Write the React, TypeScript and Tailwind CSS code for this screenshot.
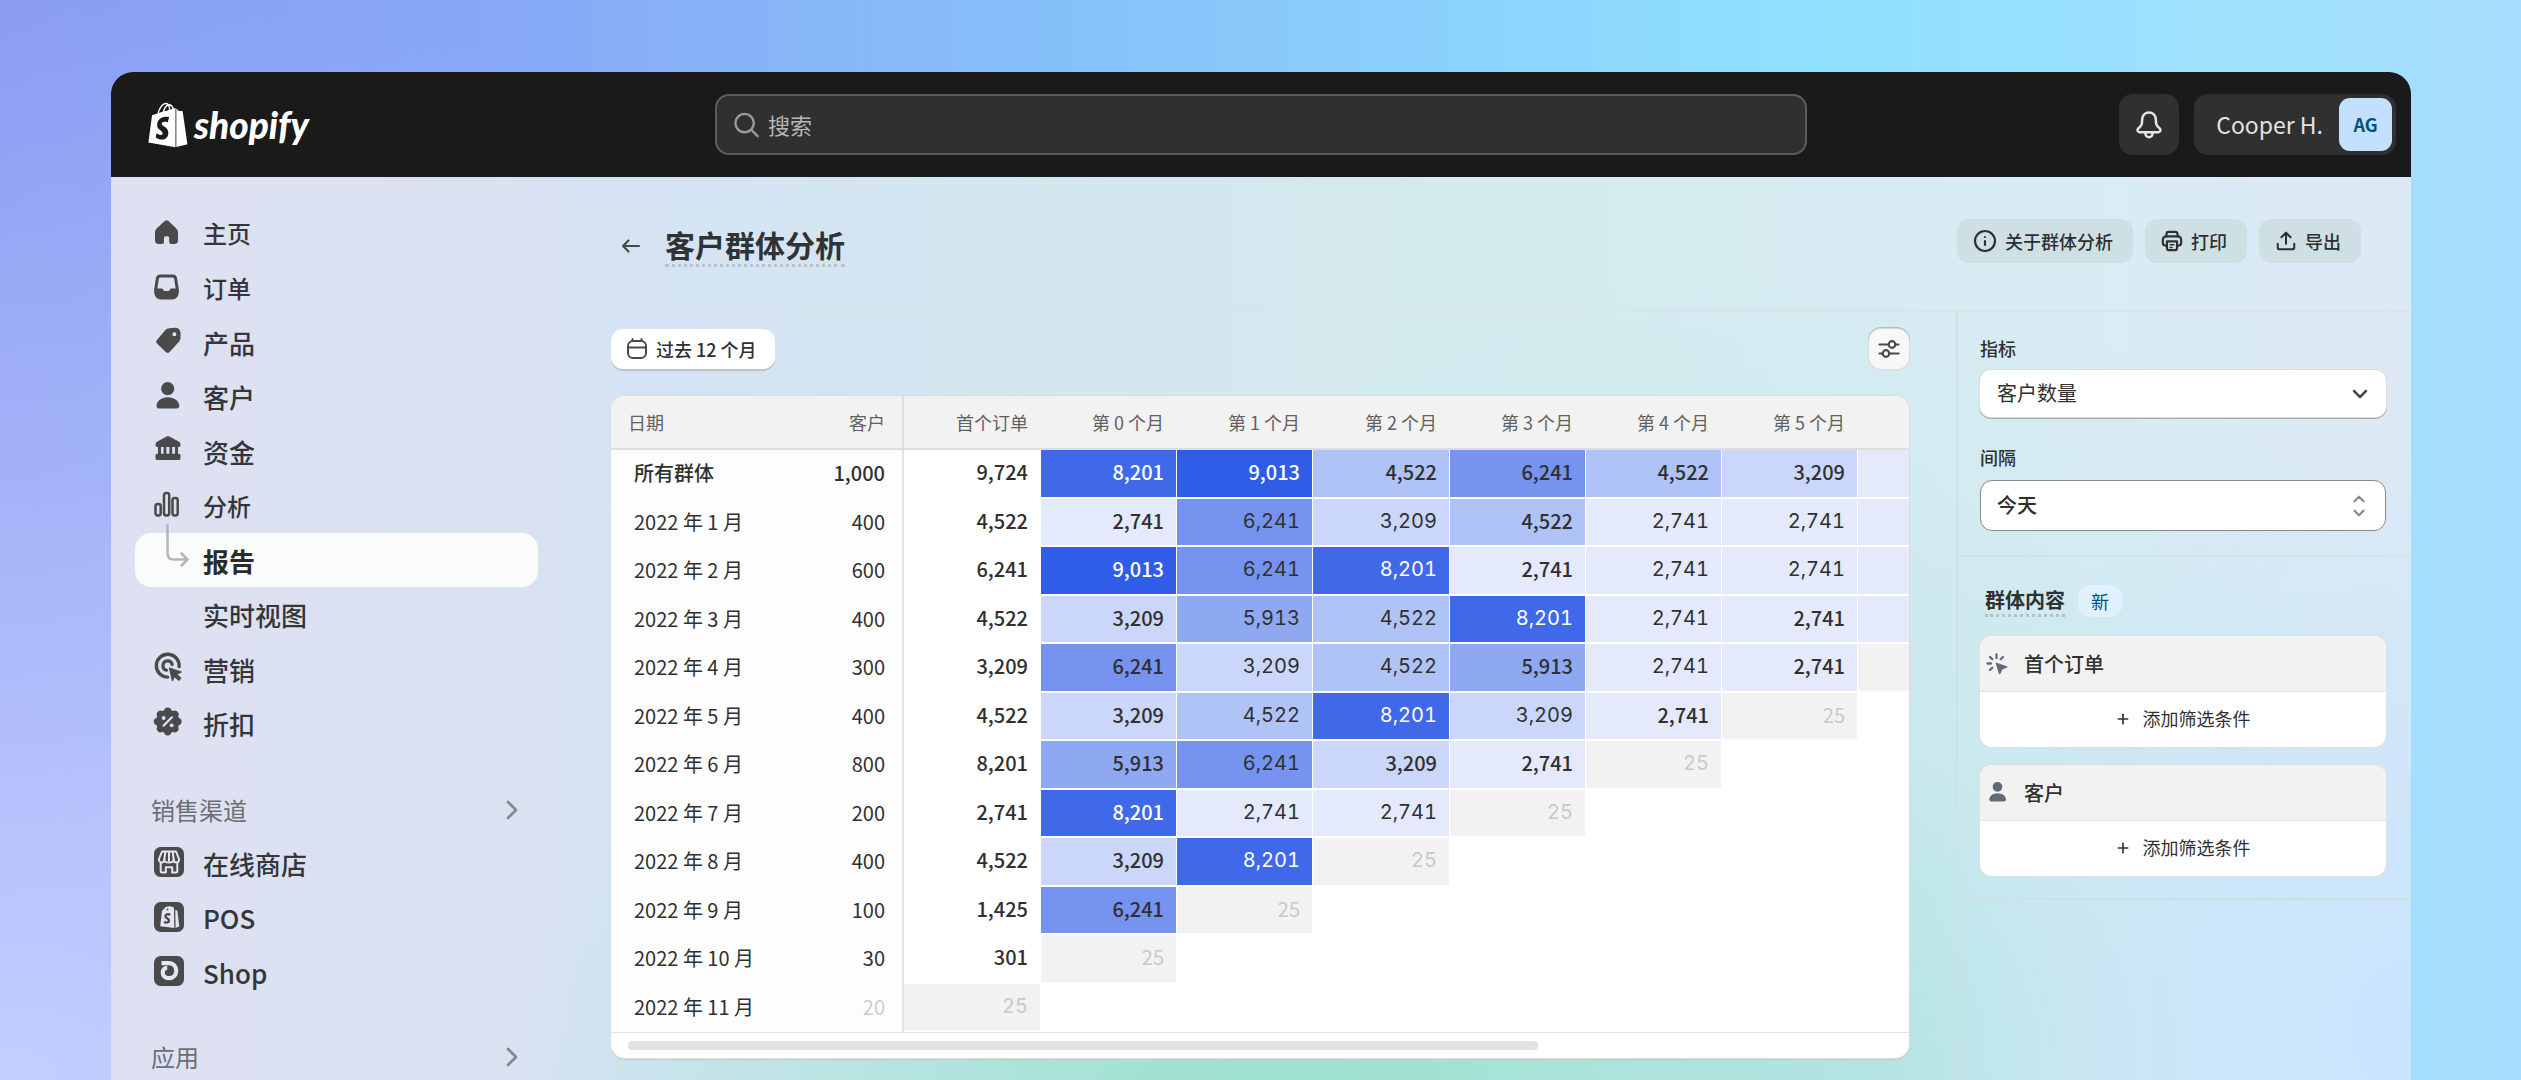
import React from "react";
import { FaShopify } from "react-icons/fa";
import { ChevronDown, ChevronRight, ChevronUp, Info, Plus, Upload } from "lucide-react";

const ICON = "h-[30px] w-[30px] shrink-0 overflow-visible text-[#4a4a4a]";

function HomeIcon() {
  return (
    <svg viewBox="0 0 30 30" className={ICON} fill="currentColor" aria-hidden="true">
      <path d="M12.6 3.1c1.1-1 2.8-1 3.9 0l7.6 7.2c1.2 1.1 1.9 2.7 1.9 4.3v8c0 2-1.3 3.4-3.2 3.4h-3.6c-1.2 0-2-.9-2-2v-4c0-1-.8-1.8-1.8-1.8h-1.6c-1 0-1.8.8-1.8 1.8v4c0 1.1-.8 2-2 2H6.4C4.4 26 3 24.6 3 22.6v-8c0-1.6.7-3.2 1.9-4.3z" />
    </svg>
  );
}

function OrdersIcon() {
  return (
    <svg viewBox="0 0 30 30" className={ICON} fill="currentColor" fillRule="evenodd" aria-hidden="true">
      <path d="M8.2 1.5h12.6c2.4 0 4 1.4 4.3 3.7l1.7 10.8c.6 6-1.6 10.5-7 10.5H9.2c-5.4 0-7.6-4.5-7-10.5L3.9 5.2C4.2 2.9 5.8 1.5 8.2 1.5zM8.6 4.4h11.8c1 0 1.6.6 1.8 1.5l1.4 9.6h-4.2c-.8 0-1.3.5-1.6 1.2-.5 1-1 1.4-2 1.4h-2.6c-1 0-1.5-.4-2-1.4-.3-.7-.8-1.2-1.6-1.2H5.4l1.4-9.6c.2-.9.8-1.5 1.8-1.5z" />
    </svg>
  );
}

function TagIcon() {
  return (
    <svg viewBox="0 0 30 30" className={ICON} fill="currentColor" fillRule="evenodd" aria-hidden="true">
      <path d="M17.5 1.2L22.6.8c3.9 0 5.9 2 5.9 5.7v4c0 2-.7 3.3-2 4.8l-8.9 9.7c-1 1.1-2.6 1.1-3.6.2L5 16.6c-1-1-1-2.4-.1-3.5L13 3.4c1.3-1.5 2.5-2 4.5-2.2zM22.4 5.2a2 2 0 1 0 0 4 2 2 0 0 0 0-4z" />
    </svg>
  );
}

function PersonIcon({ className = ICON }: { className?: string }) {
  return (
    <svg viewBox="0 0 30 30" className={className} fill="currentColor" aria-hidden="true">
      <circle cx="15.7" cy="6.7" r="6.6" />
      <path d="M4.5 24c0-5 5-8.8 11.3-8.8S27.3 19 27.3 24c0 1.6-1 2.5-2.4 2.5H6.9c-1.4 0-2.4-.9-2.4-2.5z" />
    </svg>
  );
}

function BankIcon() {
  return (
    <svg viewBox="0 0 30 30" className={ICON} fill="currentColor" aria-hidden="true">
      <path d="M14.6.6c.9-.5 1.9-.5 2.8 0l9.3 5c1 .6 1.8 1.6 1.8 2.8v1.2c0 .8-.6 1.4-1.4 1.4H5c-.8 0-1.4-.6-1.4-1.4V8.4c0-1.2.7-2.2 1.8-2.8z" />
      <rect x="6" y="10" width="3" height="9" />
      <rect x="11.6" y="10" width="2.8" height="9" />
      <rect x="17.4" y="10" width="2.8" height="9" />
      <rect x="23" y="10" width="3" height="9" />
      <rect x="3.5" y="17.8" width="25" height="6.2" rx="1.5" />
    </svg>
  );
}

function BarsIcon() {
  return (
    <svg viewBox="0 0 30 30" className={ICON} fill="none" stroke="currentColor" strokeWidth="2.5" aria-hidden="true">
      <rect x="3.5" y="13" width="5.2" height="11.5" rx="2.2" />
      <rect x="12" y="2" width="5.2" height="22.5" rx="2.2" />
      <rect x="20.5" y="7" width="5.2" height="17.5" rx="2.2" />
    </svg>
  );
}

function BranchIcon() {
  return (
    <svg
      viewBox="0 0 30 30"
      className="h-[30px] w-[30px] shrink-0 overflow-visible text-[#b5b5b5]"
      fill="none"
      stroke="currentColor"
      strokeWidth="2.5"
      strokeLinecap="round"
      strokeLinejoin="round"
      aria-hidden="true"
    >
      <path d="M15.5-20V8c0 4.5 2 6.5 6 6.5h13.5M29.5 8.5l6 6-6 6" />
    </svg>
  );
}

function TargetIcon() {
  return (
    <svg viewBox="0 0 30 30" className={ICON} fill="none" stroke="currentColor" aria-hidden="true">
      <path d="M27.1 12.6A11.4 11.4 0 1 0 15.7 23.1" strokeWidth="3.4" strokeLinecap="round" />
      <path d="M20.2 10.5A4.7 4.7 0 1 0 14.5 16.2" strokeWidth="3.2" strokeLinecap="round" />
      <path d="M17.3 13.9l12.2 4.1-4.5 2.3 4 4-2.3 2.3-4-4-2.3 4.4z" fill="currentColor" strokeWidth="1" strokeLinejoin="round" />
    </svg>
  );
}

function DiscountIcon() {
  return (
    <svg viewBox="0 0 30 30" className={ICON} fill="currentColor" aria-hidden="true">
      <circle cx="15.7" cy="12.5" r="11.8" />
      <g>
        {[0, 45, 90, 135, 180, 225, 270, 315].map((a) => (
          <circle key={a} cx="15.7" cy="2.2" r="3.6" transform={`rotate(${a} 15.7 12.5)`} />
        ))}
      </g>
      <path d="M11.5 16.7l8.4-8.4" stroke="#dde1f1" strokeWidth="2.2" strokeLinecap="round" />
      <circle cx="11.7" cy="9" r="1.9" fill="#dde1f1" />
      <circle cx="19.7" cy="16.3" r="1.9" fill="#dde1f1" />
    </svg>
  );
}

function StoreIcon() {
  return (
    <svg viewBox="-2 1 30 30" className={ICON} fill="none" aria-hidden="true">
      <rect width="30" height="30" rx="6.5" fill="currentColor" />
      <g stroke="#e4e6f3" strokeWidth="2" strokeLinejoin="round" strokeLinecap="round">
        <path d="M8 4.5h14l3 7.5c.4 2-1 3.5-2.7 3.5S19.7 14.3 19.7 12.6c0 1.7-1.5 3-4.7 3s-4.7-1.3-4.7-3c0 1.7-1.1 2.9-2.7 2.9S4.6 14 5 12z" />
        <path d="M10.3 12.5l1-7.5M19.7 12.5l-1-7.5M15 5v9" />
        <path d="M6.7 16v8.3c0 .7.5 1.2 1.2 1.2h3.9v-5.3h6.4v5.3h3.9c.7 0 1.2-.5 1.2-1.2V16" />
      </g>
    </svg>
  );
}

function PosIcon() {
  return (
    <svg viewBox="-2 1 30 30" className={ICON} fill="none" aria-hidden="true">
      <rect width="30" height="30" rx="6.5" fill="currentColor" />
      <path d="M8 9l3.5-3.8c3-1.6 6.3-1.4 8.5.6l.3 20.2L6.2 24.3z" fill="#e4e6f3" />
      <path d="M21.3 8l2 .6 2 15.6-3.7 1.7z" fill="#e4e6f3" />
      <circle cx="13.5" cy="7.6" r="1" fill="currentColor" />
      <path d="M16.3 12.8c-2.3-1.2-5-.3-4.9 1.6.1 2 3.7 1.9 3.6 4.2-.1 2-2.7 2.6-4.9 1.2" stroke="currentColor" strokeWidth="2.3" />
    </svg>
  );
}

function ShopIcon() {
  return (
    <svg viewBox="-2 1 30 30" className={ICON} fill="none" aria-hidden="true">
      <rect width="30" height="30" rx="6.5" fill="currentColor" />
      <path d="M7.5 7.2H14.5c5 0 7.7 3.6 7.7 7.5 0 4.4-3 7.5-7.2 7.5-3.7 0-6.3-2.4-6.3-5.6 0-2.7 1.8-4.7 4.5-4.7" stroke="#e4e6f3" strokeWidth="4.2" />
    </svg>
  );
}

type NavItem = {
  label: string;
  icon?: React.ReactNode;
  size: "sm" | "lg";
  active?: boolean;
};

const NAV_TOP: NavItem[] = [
  { label: "主页", icon: <HomeIcon />, size: "sm" },
  { label: "订单", icon: <OrdersIcon />, size: "sm" },
  { label: "产品", icon: <TagIcon />, size: "lg" },
  { label: "客户", icon: <PersonIcon />, size: "lg" },
  { label: "资金", icon: <BankIcon />, size: "lg" },
  { label: "分析", icon: <BarsIcon />, size: "sm" },
  { label: "报告", icon: <BranchIcon />, size: "lg", active: true },
  { label: "实时视图", size: "lg" },
  { label: "营销", icon: <TargetIcon />, size: "lg" },
  { label: "折扣", icon: <DiscountIcon />, size: "lg" },
];

const NAV_CHANNELS: NavItem[] = [
  { label: "在线商店", icon: <StoreIcon />, size: "lg" },
  { label: "POS", icon: <PosIcon />, size: "lg" },
  { label: "Shop", icon: <ShopIcon />, size: "lg" },
];

function NavRow({ item }: { item: NavItem }) {
  return (
    <li className="h-[55px] odd:h-[54px]">
      <a
        href="#"
        aria-current={item.active ? "page" : undefined}
        className={
          "flex h-full items-center gap-[21px] rounded-2xl pl-[17px] " +
          (item.size === "sm" ? "text-[24px] " : "text-[26px] ") +
          (item.active ? "bg-[#fafbfb] font-bold text-[#2b2b2b]" : "font-medium text-[#34363a]")
        }
      >
        {item.icon ?? <span className="w-[30px] shrink-0" />}
        <span>{item.label}</span>
      </a>
    </li>
  );
}

function NavHeading({ label }: { label: string }) {
  return (
    <button type="button" className="flex h-[52px] w-full items-center justify-between pr-[10px] pl-4 text-[24px] text-[#6c6e74]">
      <span>{label}</span>
      <ChevronRight className="h-8 w-8 text-[#85878c]" strokeWidth={2} />
    </button>
  );
}

function Sidebar() {
  return (
    <nav aria-label="主导航" className="w-[451px] shrink-0 px-6 pt-[29px]">
      <ul>
        {NAV_TOP.map((i) => (
          <NavRow key={i.label} item={i} />
        ))}
      </ul>
      <div className="mt-[33px]">
        <NavHeading label="销售渠道" />
        <ul>
          {NAV_CHANNELS.map((i) => (
            <NavRow key={i.label} item={i} />
          ))}
        </ul>
      </div>
      <div className="mt-[32px]">
        <NavHeading label="应用" />
      </div>
    </nav>
  );
}

function TopBar() {
  return (
    <header className="grid h-[105px] shrink-0 grid-cols-[1fr_minmax(0,1092px)_1fr] items-center bg-[#1a1a1a] px-[15px]">
      <a href="#" aria-label="shopify" className="flex items-center gap-[6px] pl-[22px] text-white">
        <FaShopify className="h-[46px] w-10" />
        <span className="font-['Lato'] text-[37px] leading-10 font-black italic">shopify</span>
      </a>
      <label className="flex h-[61px] items-center gap-2 rounded-[14px] border-2 border-[#5c5c5c] bg-[#303030] px-4">
        <svg viewBox="0 0 28 28" className="h-7 w-7 text-[#9a9a9a]" fill="none" stroke="currentColor" strokeWidth="2.5" strokeLinecap="round" aria-hidden="true">
          <circle cx="12" cy="12" r="9.5" />
          <path d="M19 19l6.5 6.5" />
        </svg>
        <input type="search" aria-label="搜索" placeholder="搜索" className="w-full bg-transparent text-[22px] text-white outline-none placeholder:text-[#b5b5b5]" />
      </label>
      <div className="flex justify-end gap-[15px]">
        <button type="button" aria-label="通知" className="flex h-[61px] w-[60px] items-center justify-center rounded-[14px] bg-[#303030]">
          <svg viewBox="0 0 28 28" className="h-7 w-7 text-[#e6e6e6]" fill="none" stroke="currentColor" strokeWidth="2.5" strokeLinejoin="round" aria-hidden="true">
            <path d="M14 1.5c-4 0-6.5 2.9-6.8 6.7l-.3 3.9c-.1 1.2-.6 2.3-1.5 3.2l-2.3 2.3c-1.3 1.3-.4 3.6 1.5 3.6h18.800c1.900 0 2.800-2.300 1.500-3.600l-2.300-2.300c-.9-.9-1.400-2-1.500-3.200l-.3-3.900C20.500 4.400 18 1.500 14 1.500z" />
            <path d="M10.5 21.5v1.2c0 2 1.5 3.6 3.5 3.6s3.5-1.6 3.5-3.6v-1.2" />
          </svg>
        </button>
        <button type="button" className="flex h-[61px] items-center gap-[16px] rounded-[14px] bg-[#303030] pr-1 pl-[22px] text-[23px] whitespace-nowrap text-[#e3e3e3]">
          <span>Cooper H.</span>
          <span className="flex h-[53px] w-[53px] items-center justify-center rounded-[11px] bg-[#c3e1ff] text-[18px] font-bold text-[#00527c]">AG</span>
        </button>
      </div>
    </header>
  );
}

const ACTION = "flex h-11 items-center gap-2 rounded-xl bg-[#cfe0e5] pr-5 pl-4 text-[18px] font-medium text-[#303030]";

function PageHeader() {
  return (
    <div className="flex h-[135px] shrink-0 items-start justify-between border-b-2 border-[#dde5e4] pt-[42px] pr-[50px] pl-[59px]">
      <div className="flex items-center gap-6 pt-[5px]">
        <a href="#" aria-label="返回">
          <svg viewBox="0 0 20 16" className="h-4 w-5 text-[#4a4a4a]" fill="none" stroke="currentColor" strokeWidth="2.2" strokeLinecap="round" strokeLinejoin="round" aria-hidden="true">
            <path d="M18 8H2M7.5 2.5L2 8l5.5 5.5" />
          </svg>
        </a>
        <h1 className="border-b-[3px] border-dotted border-[#b9c4cc] text-[30px] leading-10 font-bold text-[#303235]">客户群体分析</h1>
      </div>
      <div className="flex gap-3">
        <button type="button" className={ACTION}>
          <Info className="h-6 w-6" strokeWidth={2.2} />
          关于群体分析
        </button>
        <button type="button" className={ACTION}>
          <svg viewBox="0 0 24 24" className="h-[22px] w-[22px]" fill="none" stroke="currentColor" strokeWidth="2.4" strokeLinejoin="round" strokeLinecap="round" aria-hidden="true">
            <path d="M6 7V4.5C6 3.1 7.1 2 8.5 2h7C16.9 2 18 3.1 18 4.5V7" />
            <path d="M6.5 17H5c-1.7 0-3-1.3-3-3v-3.5C2 8.6 3.6 7 5.5 7h13C20.4 7 22 8.6 22 10.5V14c0 1.7-1.3 3-3 3h-1.5" />
            <path d="M6.5 12.5h11v7c0 1.4-1.1 2.5-2.5 2.5H9c-1.4 0-2.5-1.1-2.5-2.5z" />
            <path d="M10 16h4M10 19h2" strokeWidth="1.6" />
          </svg>
          打印
        </button>
        <button type="button" className={ACTION}>
          <Upload className="h-[22px] w-[22px]" strokeWidth={2.2} />
          导出
        </button>
      </div>
    </div>
  );
}

const TONE: Record<string, string> = {
  "9,013": "bg-[#2f5de8] text-white",
  "8,201": "bg-[#4069ea] text-white",
  "6,241": "bg-[#7593ef] text-[#303030]",
  "5,913": "bg-[#8fa8f2] text-[#303030]",
  "4,522": "bg-[#b0c3f6] text-[#303030]",
  "3,209": "bg-[#cad6fa] text-[#303030]",
  "2,741": "bg-[#e4e9fb] text-[#303030]",
  "25": "bg-[#f2f2f2] text-[#c9c9c9]",
};

const HEADS = ["首个订单", "第 0 个月", "第 1 个月", "第 2 个月", "第 3 个月", "第 4 个月", "第 5 个月", "第 6 个月"];

type Row = { date: string; customers: string; first: string; cells: string[]; next?: string };

const ROWS: Row[] = [
  { date: "所有群体", customers: "1,000", first: "9,724", cells: ["8,201", "9,013", "4,522", "6,241", "4,522", "3,209"], next: "bg-[#e4e9fb]" },
  { date: "2022 年 1 月", customers: "400", first: "4,522", cells: ["2,741", "~6,241", "~3,209", "4,522", "~2,741", "~2,741"], next: "bg-[#e4e9fb]" },
  { date: "2022 年 2 月", customers: "600", first: "6,241", cells: ["9,013", "~6,241", "~8,201", "2,741", "~2,741", "~2,741"], next: "bg-[#e4e9fb]" },
  { date: "2022 年 3 月", customers: "400", first: "4,522", cells: ["3,209", "~5,913", "~4,522", "~8,201", "~2,741", "2,741"], next: "bg-[#e4e9fb]" },
  { date: "2022 年 4 月", customers: "300", first: "3,209", cells: ["6,241", "~3,209", "~4,522", "5,913", "~2,741", "2,741"], next: "bg-[#f2f2f2]" },
  { date: "2022 年 5 月", customers: "400", first: "4,522", cells: ["3,209", "~4,522", "~8,201", "~3,209", "2,741", "25"] },
  { date: "2022 年 6 月", customers: "800", first: "8,201", cells: ["5,913", "~6,241", "3,209", "2,741", "~25"] },
  { date: "2022 年 7 月", customers: "200", first: "2,741", cells: ["8,201", "~2,741", "~2,741", "~25"] },
  { date: "2022 年 8 月", customers: "400", first: "4,522", cells: ["3,209", "~8,201", "~25"] },
  { date: "2022 年 9 月", customers: "100", first: "1,425", cells: ["6,241", "25"] },
  { date: "2022 年 10 月", customers: "30", first: "301", cells: ["25"] },
  { date: "2022 年 11 月", customers: "20", first: "~25", cells: [] },
];

function ValueCell({ value, plain }: { value?: string; plain?: boolean }) {
  if (!value) return <td />;
  const light = value.startsWith("~");
  const text = light ? value.slice(1) : value;
  const tone = plain && text !== "25" ? "text-[#303030]" : TONE[text];
  return (
    <td
      className={
        "border-r border-b-2 border-white bg-clip-padding pr-[12px] pb-[3px] text-right " +
        tone +
        (light ? " font-['Inter'] font-normal tabular-nums" : text === "25" ? " font-normal" : " font-medium")
      }
    >
      {text}
    </td>
  );
}

function CohortTable() {
  return (
    <div className="mt-[27px] overflow-hidden rounded-[14px] bg-white shadow-[0_0_0_1px_#dcdcdc,0_2px_1px_0_#c4cccc]">
      <div className="overflow-hidden">
        <table className="w-[1383px] table-fixed border-separate border-spacing-0 text-[20px] text-[#303030]">
          <colgroup>
            <col className="w-[174px]" />
            <col className="w-[119px]" />
            <col className="w-[137px]" />
            {HEADS.slice(1).map((h, i) => (
              <col key={h} className={i === 2 ? "w-[137px]" : "w-[136px]"} />
            ))}
          </colgroup>
          <thead>
            <tr className="h-[54px] bg-[#f2f2f2] text-[18px] text-[#616161]">
              <th scope="col" className="border-b-2 border-[#dedede] pl-[17px] text-left font-normal">日期</th>
              <th scope="col" className="border-r-2 border-b-2 border-[#dedede] pr-[17px] text-right font-normal">客户</th>
              {HEADS.map((h) => (
                <th key={h} scope="col" className="border-b-2 border-[#dedede] pr-[13px] text-right font-normal whitespace-nowrap">
                  {h}
                </th>
              ))}
            </tr>
          </thead>
          <tbody>
            {ROWS.map((r, n) => (
              <tr key={r.date} className="odd:h-[49px] even:h-12">
                <th scope="row" className={"bg-[#fdfdfd] pb-[3px] pl-[23px] text-left whitespace-nowrap " + (n === 0 ? "font-medium" : "font-normal")}>
                  {r.date}
                </th>
                <td
                  className={
                    "border-r-2 border-[#e3e3e3] bg-[#fdfdfd] pr-[17px] pb-[3px] text-right " +
                    (n === 0 ? "font-medium" : n === ROWS.length - 1 ? "text-[#cccccc]" : "")
                  }
                >
                  {r.customers}
                </td>
                <ValueCell value={r.first} plain />
                {[0, 1, 2, 3, 4, 5].map((c) => (
                  <ValueCell key={c} value={r.cells[c]} />
                ))}
                <td className={"border-r border-b-2 border-white bg-clip-padding " + (r.next ?? "")} />
              </tr>
            ))}
          </tbody>
        </table>
      </div>
      <div className="border-t border-[#e3e3e3] px-[17px] pt-2 pb-2">
        <div className="h-[9px] w-[72%] rounded-[4px] bg-[#e2e2e2]" />
      </div>
    </div>
  );
}

function FilterCard({ title, icon }: { title: string; icon: React.ReactNode }) {
  return (
    <section className="overflow-hidden rounded-xl bg-white shadow-[0_0_0_1px_#dadfe0]">
      <h3 className="flex h-[56px] items-center gap-[16px] border-b border-[#e3e3e3] bg-[#f2f2f2] pl-[6px] text-[20px] font-medium text-[#303030]">
        {icon}
        {title}
      </h3>
      <button type="button" className="flex h-[55px] w-full items-center justify-center gap-[12px] pr-px pb-[2px] text-[18px] text-[#303030]">
        <Plus className="h-4 w-4" strokeWidth={2.5} />
        添加筛选条件
      </button>
    </section>
  );
}

function FilterPanel() {
  return (
    <aside className="w-[455px] shrink-0 border-l-2 border-[#cfe1e3]">
      <div className="border-b-2 border-[#d6e3e6] pt-[24px] pr-[25px] pb-[24px] pl-[22px]">
        <label htmlFor="metric" className="block text-[18px] leading-6 font-medium text-[#303030]">
          指标
        </label>
        <div className="relative mt-[10px]">
          <select id="metric" className="h-[47px] w-full appearance-none rounded-[11px] bg-white pr-12 pb-[2px] pl-[17px] text-[20px] leading-6 text-[#303030] shadow-[0_0_0_1px_#dcdcdc,0_1px_0_1px_#a8a8a8]">
            <option>客户数量</option>
          </select>
          <ChevronDown className="pointer-events-none absolute top-1/2 right-[14px] h-6 w-6 -translate-y-1/2 text-[#4a4a4a]" strokeWidth={2.5} />
        </div>
        <label htmlFor="interval" className="mt-[28px] block text-[18px] leading-6 font-medium text-[#303030]">
          间隔
        </label>
        <div className="relative mt-[11px]">
          <select id="interval" className="h-[51px] w-full appearance-none rounded-xl border border-[#8a8a8a] bg-white pr-12 pb-[2px] pl-[16px] text-[20px] leading-6 font-medium text-[#303030]">
            <option>今天</option>
          </select>
          <span className="pointer-events-none absolute top-1/2 right-[18px] flex -translate-y-1/2 flex-col text-[#8a8a8a]">
            <ChevronUp className="-mb-1 h-[18px] w-[18px]" strokeWidth={3} />
            <ChevronDown className="h-[18px] w-[18px]" strokeWidth={3} />
          </span>
        </div>
      </div>
      <div className="border-b-2 border-[#cfdfe2] pt-[28px] pr-[25px] pb-[22px] pl-[22px]">
        <div className="flex items-center gap-[13px] pl-[5px]">
          <h2 className="border-b-[3px] border-dotted border-[#b4c0c6] text-[20px] leading-[29px] font-bold text-[#303030]">群体内容</h2>
          <span className="flex h-8 items-center rounded-xl bg-[#e0f0ff] px-[13px] text-[18px] text-[#00527c]">新</span>
        </div>
        <div className="mt-[19px] flex flex-col gap-[18px]">
          <FilterCard
            title="首个订单"
            icon={
              <svg viewBox="0 0 22 22" className="h-[22px] w-[22px] text-[#616a75]" fill="none" stroke="currentColor" strokeWidth="2.3" strokeLinecap="round" strokeLinejoin="round" aria-hidden="true">
                <path d="M10.5 1.5v3.5M4 4l2.3 2.3M17 4l-2.3 2.3M1.5 10.5H5M4 17l2.3-2.3" />
                <path d="M10.5 10.5l10 3.5-4.7 1.9-2.1 4.6z" fill="currentColor" strokeWidth="1.5" />
              </svg>
            }
          />
          <FilterCard title="客户" icon={<PersonIcon className="h-[22px] w-[22px] text-[#616a75]" />} />
        </div>
      </div>
    </aside>
  );
}

export default function App() {
  return (
    <div className="h-screen overflow-hidden bg-[radial-gradient(ellipse_70%_100%_at_0%_100%,#c4ceff_0%,#c4ceff00_100%),linear-gradient(to_right,#8a9cf2_0%,#87a9f6_20%,#86c0f9_42%,#8fe2ff_72%,#a2e0ff_92%,#a6dcff_100%)] pt-[72px] pr-[110px] pl-[111px] font-['Noto_Sans_CJK_SC','Noto_Sans',sans-serif]">
      <div className="flex h-full flex-col overflow-hidden rounded-t-[22px] bg-[radial-gradient(ellipse_22%_60%_at_100%_95%,#c9e4ff_0%,#c9e4ff00_100%),radial-gradient(ellipse_34%_60%_at_51%_106%,#98e0cb_0%,#a9e3d8cc_45%,#c4e9ee00_100%),radial-gradient(ellipse_36%_80%_at_72%_100%,#b4e3e6_0%,#c4e8ea99_50%,#cdeaee00_100%),linear-gradient(to_right,#dde1f2_0%,#dce1f1_16%,#d5e3f4_22%,#d3e8ee_45%,#d3ebef_65%,#d8ecf3_82%,#dce9f4_100%)]">
        <TopBar />
        <div className="flex min-h-0 flex-1">
          <Sidebar />
          <main className="flex min-w-0 flex-1 flex-col">
            <PageHeader />
            <div className="flex min-h-0 flex-1">
              <div className="min-w-0 flex-1 pt-[17px] pr-[47px] pl-[49px]">
                <div className="flex items-center justify-between">
                  <button type="button" className="flex h-10 items-center gap-2 rounded-xl bg-white pr-[18px] pl-[15px] text-[18px] font-medium text-[#303030] shadow-[0_2px_0_0_#bcc3c9]">
                    <svg viewBox="0 0 22 22" className="h-[22px] w-[22px] text-[#4a4a4a]" fill="none" stroke="currentColor" strokeWidth="2" strokeLinecap="round" aria-hidden="true">
                      <rect x="2" y="3" width="18" height="17" rx="5" />
                      <path d="M2 9.5h18M6.5 1v2M15.5 1v2" />
                    </svg>
                    过去 12 个月
                  </button>
                  <button type="button" aria-label="表格设置" className="flex h-10 w-10 items-center justify-center rounded-xl bg-[#f7f7f7] text-[#4a4a4a] shadow-[0_0_0_1px_#d5dbdc,0_-1px_0_1px_#b5babb]">
                    <svg viewBox="0 0 22 22" className="h-[22px] w-[22px]" fill="none" stroke="currentColor" strokeWidth="2.2" strokeLinecap="round" aria-hidden="true">
                      <path d="M1.5 6.5h9M17.5 6.5h3M1.5 15.5h3M11.5 15.5h9" />
                      <circle cx="14" cy="6.5" r="3.3" />
                      <circle cx="8" cy="15.5" r="3.3" />
                    </svg>
                  </button>
                </div>
                <CohortTable />
              </div>
              <FilterPanel />
            </div>
          </main>
        </div>
      </div>
    </div>
  );
}
